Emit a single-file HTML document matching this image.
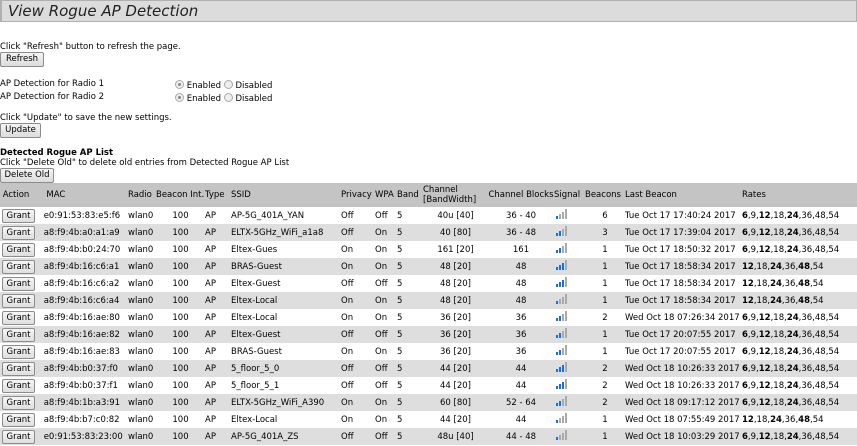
<!DOCTYPE html>
<html><head><meta charset="utf-8"><style>
*{margin:0;padding:0;box-sizing:border-box}
body{width:857px;height:446px;overflow:hidden;background:#fff;font-family:"DejaVu Sans",Verdana,sans-serif;font-size:8.5px;color:#000;position:relative}
.title{position:absolute;left:0;top:0;width:857px;height:22px;background:#dcdcdc;border:1px solid #b0b0b0;border-left:2px solid #b0b0b0}
.title span{position:absolute;left:6px;top:1px;font-style:italic;font-size:15px;color:#222}
.a{position:absolute;white-space:nowrap}
.btn{position:absolute;height:15px;background:linear-gradient(#f4f4f4,#dcdcdc);border:1px solid #8c8c8c;border-radius:2px;font-size:8.5px;text-align:center;line-height:13px}
.rad{display:inline-block;width:9px;height:9px;border-radius:50%;border:1px solid #aaa;background:#eee;vertical-align:-1px;position:relative}
.rad.on::after{content:"";position:absolute;left:2px;top:2px;width:3px;height:3px;border-radius:50%;background:#888}
table{position:absolute;left:0;top:183px;width:857px;border-collapse:collapse;table-layout:fixed}
td{height:17px;white-space:nowrap;overflow:hidden;padding:0;font-size:8.5px}
tr.h td{height:24px;background:#c4c4c4;line-height:10px}
tr:nth-child(odd):not(.h) td{background:#dedede}
.c{text-align:center}
.g{display:inline-block;width:33px;height:14px;margin-left:2px;background:linear-gradient(#f6f6f6,#dedede);border:1px solid #8c8c8c;border-radius:2px;text-align:center;line-height:12px}
.s{display:inline-block;width:12px;height:10px;position:relative;margin-left:2px}
.s i{position:absolute;bottom:0;width:2px;background:#aaa}
.s i.b{background:#1a6fe0}
</style></head><body>
<div class="title"><span>View Rogue AP Detection</span></div>
<div class="a" style="left:0;top:42px">Click "Refresh" button to refresh the page.</div>
<div class="btn" style="left:0;top:52px;width:44px">Refresh</div>
<div class="a" style="left:0;top:79px">AP Detection for Radio 1</div>
<div class="a" style="left:0;top:92px">AP Detection for Radio 2</div>
<div class="a" style="left:175px;top:80px"><span class="rad on"></span> Enabled <span class="rad"></span> Disabled</div>
<div class="a" style="left:175px;top:93px"><span class="rad on"></span> Enabled <span class="rad"></span> Disabled</div>
<div class="a" style="left:0;top:113px">Click "Update" to save the new settings.</div>
<div class="btn" style="left:0;top:123px;width:41px">Update</div>
<div class="a" style="left:0;top:148px;font-weight:bold">Detected Rogue AP List</div>
<div class="a" style="left:0;top:158px">Click "Delete Old" to delete old entries from Detected Rogue AP List</div>
<div class="btn" style="left:0;top:168px;width:54px">Delete Old</div>
<table>
<colgroup><col style="width:41px"><col style="width:87px"><col style="width:28px"><col style="width:49px"><col style="width:26px"><col style="width:110px"><col style="width:34px"><col style="width:22px"><col style="width:26px"><col style="width:65px"><col style="width:66px"><col style="width:31px"><col style="width:40px"><col style="width:117px"><col style="width:115px"></colgroup>
<tr class="h"><td>&nbsp;Action</td><td>&nbsp;&nbsp;MAC</td><td>Radio</td><td>Beacon Int.</td><td>Type</td><td>SSID</td><td>Privacy</td><td>WPA</td><td>Band</td><td>Channel<br>[BandWidth]</td><td class="c">Channel Blocks</td><td>Signal</td><td>Beacons</td><td>Last Beacon</td><td>Rates</td></tr>
<tr><td><span class="g">Grant</span></td><td>&nbsp;e0:91:53:83:e5:f6</td><td>wlan0</td><td class="c">100</td><td>AP</td><td>AP-5G_401A_YAN</td><td>Off</td><td>Off</td><td>5</td><td class="c">40u [40]</td><td class="c">36 - 40</td><td><span class="s"><i class="b" style="left:0;height:3px"></i><i style="left:3px;height:5px"></i><i style="left:6px;height:7px"></i><i style="left:9px;height:10px"></i></span></td><td class="c">6</td><td>Tue Oct 17 17:40:24 2017</td><td><b>6</b>,9,<b>12</b>,18,<b>24</b>,36,48,54</td></tr>
<tr><td><span class="g">Grant</span></td><td>&nbsp;a8:f9:4b:a0:a1:a9</td><td>wlan0</td><td class="c">100</td><td>AP</td><td>ELTX-5GHz_WiFi_a1a8</td><td>Off</td><td>On</td><td>5</td><td class="c">40 [80]</td><td class="c">36 - 48</td><td><span class="s"><i class="b" style="left:0;height:3px"></i><i class="b" style="left:3px;height:5px"></i><i style="left:6px;height:7px"></i><i style="left:9px;height:10px"></i></span></td><td class="c">3</td><td>Tue Oct 17 17:39:04 2017</td><td><b>6</b>,9,<b>12</b>,18,<b>24</b>,36,48,54</td></tr>
<tr><td><span class="g">Grant</span></td><td>&nbsp;a8:f9:4b:b0:24:70</td><td>wlan0</td><td class="c">100</td><td>AP</td><td>Eltex-Gues</td><td>On</td><td>On</td><td>5</td><td class="c">161 [20]</td><td class="c">161</td><td><span class="s"><i class="b" style="left:0;height:3px"></i><i class="b" style="left:3px;height:5px"></i><i style="left:6px;height:7px"></i><i style="left:9px;height:10px"></i></span></td><td class="c">1</td><td>Tue Oct 17 18:50:32 2017</td><td><b>6</b>,9,<b>12</b>,18,<b>24</b>,36,48,54</td></tr>
<tr><td><span class="g">Grant</span></td><td>&nbsp;a8:f9:4b:16:c6:a1</td><td>wlan0</td><td class="c">100</td><td>AP</td><td>BRAS-Guest</td><td>On</td><td>On</td><td>5</td><td class="c">48 [20]</td><td class="c">48</td><td><span class="s"><i class="b" style="left:0;height:3px"></i><i class="b" style="left:3px;height:5px"></i><i class="b" style="left:6px;height:7px"></i><i style="left:9px;height:10px"></i></span></td><td class="c">1</td><td>Tue Oct 17 18:58:34 2017</td><td><b>12</b>,18,<b>24</b>,36,<b>48</b>,54</td></tr>
<tr><td><span class="g">Grant</span></td><td>&nbsp;a8:f9:4b:16:c6:a2</td><td>wlan0</td><td class="c">100</td><td>AP</td><td>Eltex-Guest</td><td>Off</td><td>Off</td><td>5</td><td class="c">48 [20]</td><td class="c">48</td><td><span class="s"><i class="b" style="left:0;height:3px"></i><i class="b" style="left:3px;height:5px"></i><i class="b" style="left:6px;height:7px"></i><i style="left:9px;height:10px"></i></span></td><td class="c">1</td><td>Tue Oct 17 18:58:34 2017</td><td><b>12</b>,18,<b>24</b>,36,<b>48</b>,54</td></tr>
<tr><td><span class="g">Grant</span></td><td>&nbsp;a8:f9:4b:16:c6:a4</td><td>wlan0</td><td class="c">100</td><td>AP</td><td>Eltex-Local</td><td>On</td><td>On</td><td>5</td><td class="c">48 [20]</td><td class="c">48</td><td><span class="s"><i class="b" style="left:0;height:3px"></i><i style="left:3px;height:5px"></i><i style="left:6px;height:7px"></i><i style="left:9px;height:10px"></i></span></td><td class="c">1</td><td>Tue Oct 17 18:58:34 2017</td><td><b>12</b>,18,<b>24</b>,36,<b>48</b>,54</td></tr>
<tr><td><span class="g">Grant</span></td><td>&nbsp;a8:f9:4b:16:ae:80</td><td>wlan0</td><td class="c">100</td><td>AP</td><td>Eltex-Local</td><td>On</td><td>On</td><td>5</td><td class="c">36 [20]</td><td class="c">36</td><td><span class="s"><i class="b" style="left:0;height:3px"></i><i class="b" style="left:3px;height:5px"></i><i style="left:6px;height:7px"></i><i style="left:9px;height:10px"></i></span></td><td class="c">2</td><td>Wed Oct 18 07:26:34 2017</td><td><b>6</b>,9,<b>12</b>,18,<b>24</b>,36,48,54</td></tr>
<tr><td><span class="g">Grant</span></td><td>&nbsp;a8:f9:4b:16:ae:82</td><td>wlan0</td><td class="c">100</td><td>AP</td><td>Eltex-Guest</td><td>Off</td><td>Off</td><td>5</td><td class="c">36 [20]</td><td class="c">36</td><td><span class="s"><i class="b" style="left:0;height:3px"></i><i class="b" style="left:3px;height:5px"></i><i style="left:6px;height:7px"></i><i style="left:9px;height:10px"></i></span></td><td class="c">1</td><td>Tue Oct 17 20:07:55 2017</td><td><b>6</b>,9,<b>12</b>,18,<b>24</b>,36,48,54</td></tr>
<tr><td><span class="g">Grant</span></td><td>&nbsp;a8:f9:4b:16:ae:83</td><td>wlan0</td><td class="c">100</td><td>AP</td><td>BRAS-Guest</td><td>On</td><td>On</td><td>5</td><td class="c">36 [20]</td><td class="c">36</td><td><span class="s"><i class="b" style="left:0;height:3px"></i><i class="b" style="left:3px;height:5px"></i><i style="left:6px;height:7px"></i><i style="left:9px;height:10px"></i></span></td><td class="c">1</td><td>Tue Oct 17 20:07:55 2017</td><td><b>6</b>,9,<b>12</b>,18,<b>24</b>,36,48,54</td></tr>
<tr><td><span class="g">Grant</span></td><td>&nbsp;a8:f9:4b:b0:37:f0</td><td>wlan0</td><td class="c">100</td><td>AP</td><td>5_floor_5_0</td><td>Off</td><td>Off</td><td>5</td><td class="c">44 [20]</td><td class="c">44</td><td><span class="s"><i class="b" style="left:0;height:3px"></i><i class="b" style="left:3px;height:5px"></i><i class="b" style="left:6px;height:7px"></i><i style="left:9px;height:10px"></i></span></td><td class="c">2</td><td>Wed Oct 18 10:26:33 2017</td><td><b>6</b>,9,<b>12</b>,18,<b>24</b>,36,48,54</td></tr>
<tr><td><span class="g">Grant</span></td><td>&nbsp;a8:f9:4b:b0:37:f1</td><td>wlan0</td><td class="c">100</td><td>AP</td><td>5_floor_5_1</td><td>Off</td><td>Off</td><td>5</td><td class="c">44 [20]</td><td class="c">44</td><td><span class="s"><i class="b" style="left:0;height:3px"></i><i class="b" style="left:3px;height:5px"></i><i class="b" style="left:6px;height:7px"></i><i style="left:9px;height:10px"></i></span></td><td class="c">2</td><td>Wed Oct 18 10:26:33 2017</td><td><b>6</b>,9,<b>12</b>,18,<b>24</b>,36,48,54</td></tr>
<tr><td><span class="g">Grant</span></td><td>&nbsp;a8:f9:4b:1b:a3:91</td><td>wlan0</td><td class="c">100</td><td>AP</td><td>ELTX-5GHz_WiFi_A390</td><td>On</td><td>On</td><td>5</td><td class="c">60 [80]</td><td class="c">52 - 64</td><td><span class="s"><i class="b" style="left:0;height:3px"></i><i class="b" style="left:3px;height:5px"></i><i style="left:6px;height:7px"></i><i style="left:9px;height:10px"></i></span></td><td class="c">2</td><td>Wed Oct 18 09:17:12 2017</td><td><b>6</b>,9,<b>12</b>,18,<b>24</b>,36,48,54</td></tr>
<tr><td><span class="g">Grant</span></td><td>&nbsp;a8:f9:4b:b7:c0:82</td><td>wlan0</td><td class="c">100</td><td>AP</td><td>Eltex-Local</td><td>On</td><td>On</td><td>5</td><td class="c">44 [20]</td><td class="c">44</td><td><span class="s"><i class="b" style="left:0;height:3px"></i><i style="left:3px;height:5px"></i><i style="left:6px;height:7px"></i><i style="left:9px;height:10px"></i></span></td><td class="c">1</td><td>Wed Oct 18 07:55:49 2017</td><td><b>12</b>,18,<b>24</b>,36,<b>48</b>,54</td></tr>
<tr><td><span class="g">Grant</span></td><td>&nbsp;e0:91:53:83:23:00</td><td>wlan0</td><td class="c">100</td><td>AP</td><td>AP-5G_401A_ZS</td><td>Off</td><td>Off</td><td>5</td><td class="c">48u [40]</td><td class="c">44 - 48</td><td><span class="s"><i class="b" style="left:0;height:3px"></i><i style="left:3px;height:5px"></i><i style="left:6px;height:7px"></i><i style="left:9px;height:10px"></i></span></td><td class="c">1</td><td>Wed Oct 18 10:03:29 2017</td><td><b>6</b>,9,<b>12</b>,18,<b>24</b>,36,48,54</td></tr>
</table>
</body></html>
